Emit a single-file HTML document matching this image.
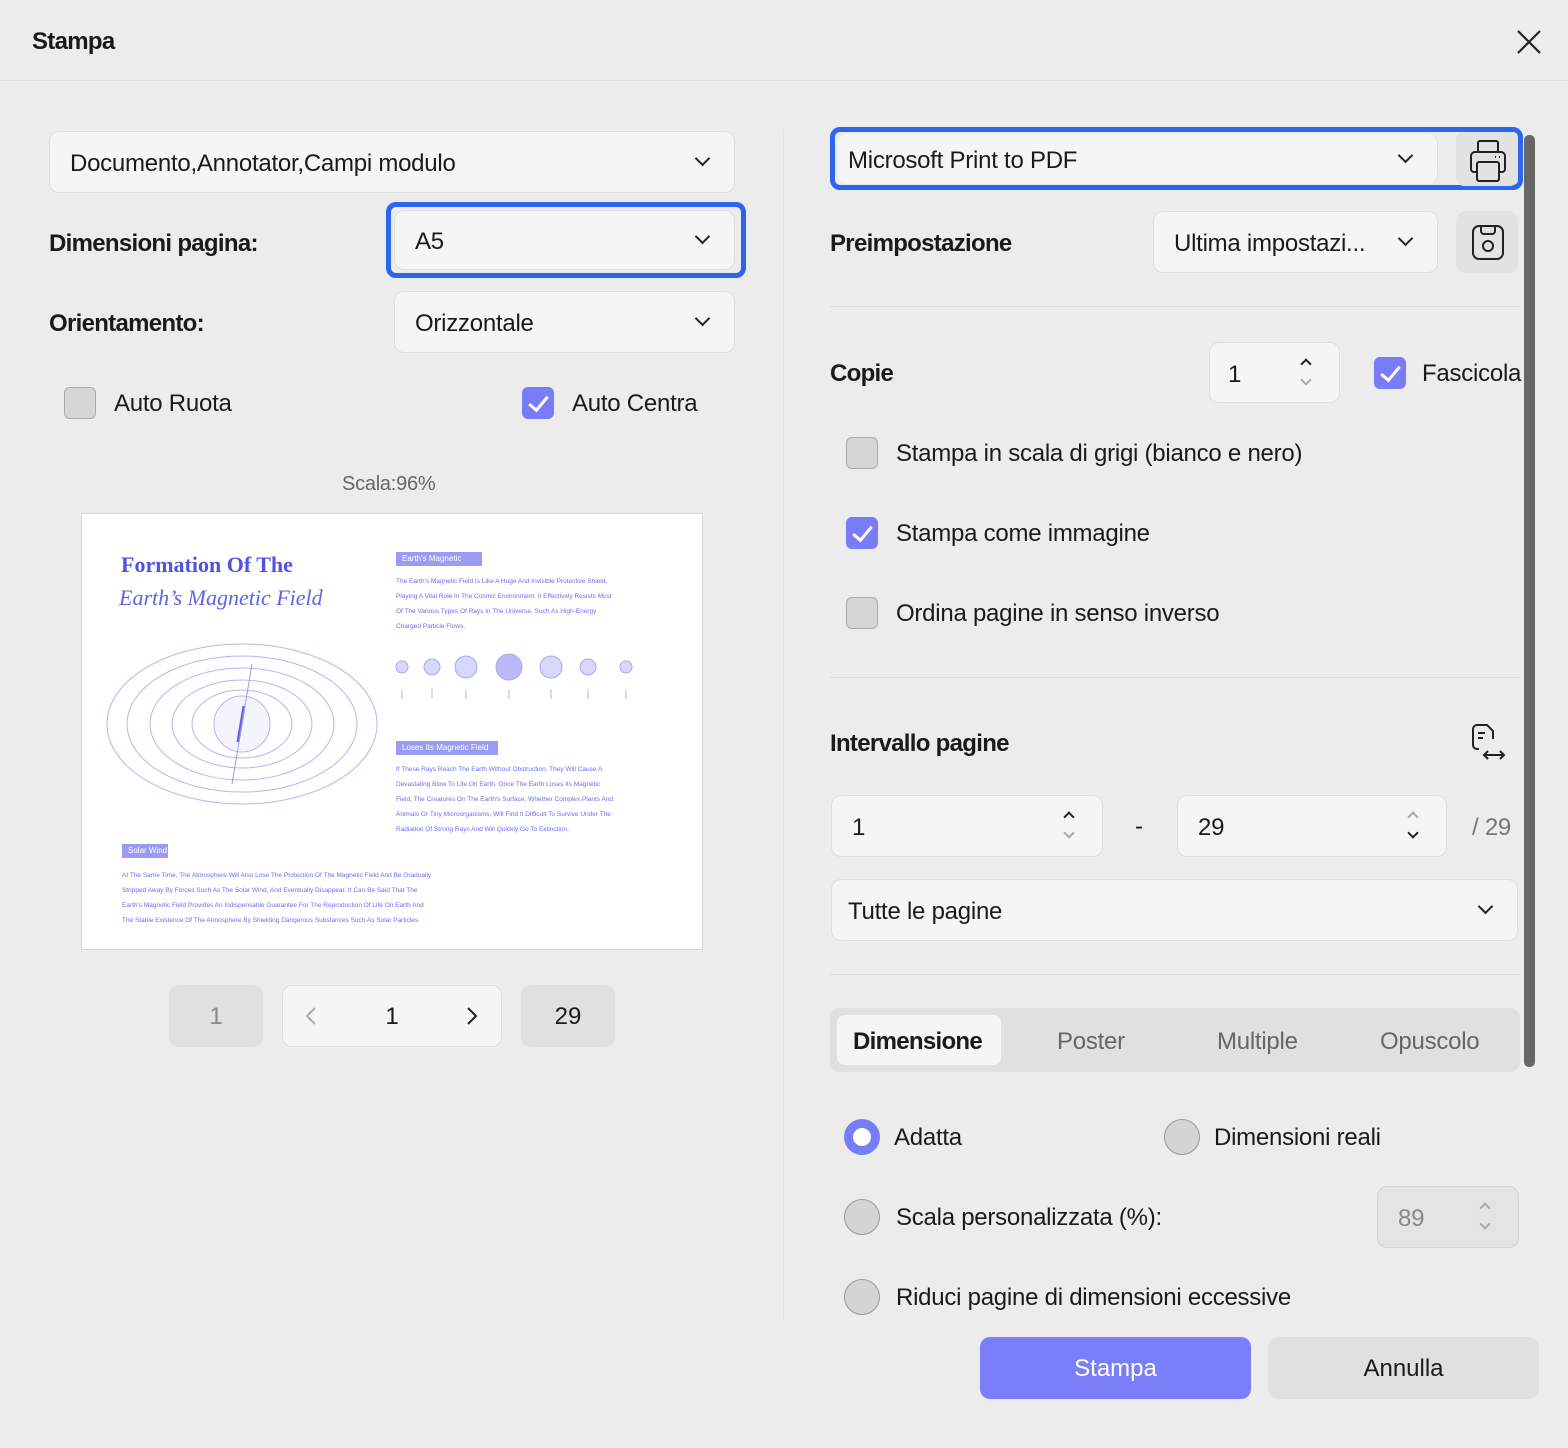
<!DOCTYPE html>
<html><head><meta charset="utf-8"><style>
*{box-sizing:border-box;margin:0;padding:0}
body{width:1568px;height:1448px;background:#ececec;font-family:"Liberation Sans",sans-serif;color:#1a1a1a;position:relative;overflow:hidden}
.a{position:absolute}
.t{position:absolute;font-size:24px;line-height:30px;white-space:nowrap;letter-spacing:-0.25px}
.b{font-weight:bold;letter-spacing:-0.7px}
.dd{position:absolute;background:#f5f5f5;border:1.5px solid #dedede;border-radius:10px}
.dd .t{left:20px;top:50%;margin-top:-13px}
.chev{position:absolute;right:26px;top:50%;width:11px;height:11px;border-right:2px solid #222;border-bottom:2px solid #222;transform:rotate(45deg);margin-top:-9px}
.cb{position:absolute;width:32px;height:32px;border-radius:6px;background:#d6d6d6;border:1.5px solid #aaa}
.cb.on{background:#7a7cf7;border-color:#7a7cf7}
.cb.on:after{content:"";position:absolute;left:10px;top:4px;width:8px;height:16px;border-right:3px solid #fff;border-bottom:3px solid #fff;transform:rotate(40deg)}
.rd{position:absolute;width:36px;height:36px;border-radius:50%;background:#d4d4d4;border:1.5px solid #999}
.rd.on{background:#fff;border:9px solid #7a7cf7}
.sep{position:absolute;height:1px;background:#dcdcdc}
.spin{position:absolute;right:26px;top:50%;width:14px;height:30px;margin-top:-17px}
.spin i{position:absolute;left:3px;width:8px;height:8px;border-left:2px solid #222;border-top:2px solid #222;transform:rotate(45deg)}
.spin i.d{top:20px;transform:rotate(225deg);border-color:#aaa}
.btn{position:absolute;border-radius:10px;text-align:center;font-size:24px}
.pv{font-family:"Liberation Sans",sans-serif;color:#6b6ef0;position:absolute;white-space:nowrap}
</style></head><body>
<div class="t b" style="left:32px;top:27px">Stampa</div>
<svg class="a" style="left:1515px;top:28px" width="28" height="28"><path d="M3 3L25 25M25 3L3 25" stroke="#222" stroke-width="2.2"/></svg>
<div class="sep" style="left:0;top:80px;width:1568px"></div>
<div class="a" style="left:783px;top:130px;width:1px;height:1190px;background:#e2e2e2"></div>

<div class="dd" style="left:49px;top:131px;width:686px;height:62px"><div class="t">Documento,Annotator,Campi modulo</div><div class="chev"></div></div>
<div class="t b" style="left:49px;top:229px">Dimensioni pagina:</div>
<div class="a" style="left:386px;top:202px;width:360px;height:76px;border:5px solid #2c66ee;border-radius:10px"></div>
<div class="dd" style="left:394px;top:210px;width:341px;height:60px"><div class="t">A5</div><div class="chev"></div></div>
<div class="t b" style="left:49px;top:309px">Orientamento:</div>
<div class="dd" style="left:394px;top:291px;width:341px;height:62px"><div class="t">Orizzontale</div><div class="chev"></div></div>
<div class="cb" style="left:64px;top:387px"></div><div class="t" style="left:114px;top:389px">Auto Ruota</div>
<div class="cb on" style="left:522px;top:387px"></div><div class="t" style="left:572px;top:389px">Auto Centra</div>
<div class="t" style="left:342px;top:469px;font-size:20px;color:#666">Scala:96%</div>

<div class="a" style="left:81px;top:513px;width:622px;height:437px;background:#fff;border:1.5px solid #d8d8d8;overflow:hidden">
 <div class="pv" style="left:39px;top:38px;font-family:'Liberation Serif',serif;font-weight:bold;font-size:22px;color:#5052e0">Formation Of The</div>
 <div class="pv" style="left:37px;top:71px;font-family:'Liberation Serif',serif;font-style:italic;font-size:22px;color:#6063e6">Earth’s Magnetic Field</div>
 <svg class="a" style="left:20px;top:120px" width="280" height="180" fill="none" stroke="#b4b5f2" stroke-width="1">
  <ellipse cx="140" cy="90" rx="135" ry="80"/><ellipse cx="140" cy="90" rx="115" ry="68"/><ellipse cx="140" cy="90" rx="92" ry="56"/><ellipse cx="140" cy="90" rx="70" ry="44"/><ellipse cx="140" cy="90" rx="50" ry="34"/>
  <circle cx="140" cy="90" r="28" fill="#f4f4ff"/><path d="M142 72L136 108" stroke="#6063e6" stroke-width="3"/><path d="M150 30L130 150" stroke="#9a9bee"/>
 </svg>
 <div class="a" style="left:314px;top:38px;width:86px;height:14px;background:#9a9cf4"></div>
 <div class="pv" style="left:320px;top:40px;font-size:8px;color:#fff">Earth's Magnetic</div>
 <div class="pv" style="left:314px;top:60px;font-size:6.5px;line-height:15px">The Earth's Magnetic Field Is Like A Huge And Invisible Protective Shield,<br>Playing A Vital Role In The Cosmic Environment. It Effectively Resists Most<br>Of The Various Types Of Rays In The Universe, Such As High-Energy<br>Charged Particle Flows.</div>
 <svg class="a" style="left:310px;top:135px" width="250" height="65"><g fill="#d6d7fb" stroke="#a8a9f2"><circle cx="10" cy="18" r="6"/><circle cx="40" cy="18" r="8"/><circle cx="74" cy="18" r="11"/><circle cx="117" cy="18" r="13" fill="#b8b9f6"/><circle cx="159" cy="18" r="11"/><circle cx="196" cy="18" r="8"/><circle cx="234" cy="18" r="6"/></g><g stroke="#bbb"><path d="M10 40v10M40 40v10M74 40v10M117 40v10M159 40v10M196 40v10M234 40v10"/></g></svg>
 <div class="a" style="left:314px;top:227px;width:102px;height:14px;background:#9a9cf4"></div>
 <div class="pv" style="left:320px;top:229px;font-size:8px;color:#fff">Loses Its Magnetic Field</div>
 <div class="pv" style="left:314px;top:248px;font-size:6.5px;line-height:15px">If These Rays Reach The Earth Without Obstruction, They Will Cause A<br>Devastating Blow To Life On Earth. Once The Earth Loses Its Magnetic<br>Field, The Creatures On The Earth's Surface, Whether Complex Plants And<br>Animals Or Tiny Microorganisms, Will Find It Difficult To Survive Under The<br>Radiation Of Strong Rays And Will Quickly Go To Extinction.</div>
 <div class="a" style="left:40px;top:330px;width:46px;height:14px;background:#9a9cf4"></div>
 <div class="pv" style="left:46px;top:332px;font-size:8px;color:#fff">Solar Wind</div>
 <div class="pv" style="left:40px;top:354px;font-size:6.5px;line-height:15px">At The Same Time, The Atmosphere Will Also Lose The Protection Of The Magnetic Field And Be Gradually<br>Stripped Away By Forces Such As The Solar Wind, And Eventually Disappear. It Can Be Said That The<br>Earth's Magnetic Field Provides An Indispensable Guarantee For The Reproduction Of Life On Earth And<br>The Stable Existence Of The Atmosphere By Shielding Dangerous Substances Such As Solar Particles.</div>
</div>

<div class="btn" style="left:169px;top:985px;width:94px;height:62px;background:#e0e0e0;color:#888;line-height:64px">1</div>
<div class="btn" style="left:282px;top:985px;width:220px;height:62px;background:#f5f5f5;border:1.5px solid #dedede;line-height:62px">1</div>
<svg class="a" style="left:303px;top:1006px" width="16" height="20"><path d="M12 2L4 10L12 18" stroke="#aaa" stroke-width="2" fill="none"/></svg>
<svg class="a" style="left:464px;top:1006px" width="16" height="20"><path d="M4 2L12 10L4 18" stroke="#222" stroke-width="2" fill="none"/></svg>
<div class="btn" style="left:521px;top:985px;width:94px;height:62px;background:#e0e0e0;line-height:64px">29</div>

<div class="a" style="left:830px;top:127px;width:693px;height:63px;border:5px solid #2c66ee;border-radius:10px"></div>
<div class="dd" style="left:838px;top:134px;width:600px;height:50px;border:none;border-right:1.5px solid #dedede"><div class="t" style="left:10px">Microsoft Print to PDF</div><div class="chev"></div></div>
<div class="a" style="left:1456px;top:132px;width:62px;height:54px;background:#e2e2e2;border-radius:8px"></div>
<svg class="a" style="left:1468px;top:139px" width="40" height="44" fill="none" stroke="#222" stroke-width="2"><rect x="10" y="2" width="20" height="11" rx="2"/><path d="M9 33H6a3 3 0 0 1-3-3V17a4 4 0 0 1 4-4h26a4 4 0 0 1 4 4v13a3 3 0 0 1-3 3h-3"/><rect x="9" y="23" width="22" height="19" rx="2"/><path d="M27 18h1M31 18h1"/></svg>

<div class="t b" style="left:830px;top:229px">Preimpostazione</div>
<div class="dd" style="left:1153px;top:211px;width:285px;height:62px"><div class="t">Ultima impostazi...</div><div class="chev"></div></div>
<div class="a" style="left:1456px;top:211px;width:62px;height:62px;background:#e2e2e2;border-radius:10px"></div>
<svg class="a" style="left:1470px;top:223px" width="36" height="40" fill="none" stroke="#222" stroke-width="2"><rect x="3" y="3" width="30" height="33" rx="6"/><path d="M11 3v5a3 3 0 0 0 3 3h8a3 3 0 0 0 3-3V3"/><circle cx="18" cy="23" r="5"/></svg>
<div class="sep" style="left:830px;top:306px;width:690px"></div>

<div class="t b" style="left:830px;top:359px">Copie</div>
<div class="dd" style="left:1209px;top:342px;width:131px;height:61px"><div class="t" style="left:18px">1</div><div class="spin"><i style="top:4px"></i><i class="d"></i></div></div>
<div class="cb on" style="left:1374px;top:357px"></div><div class="t" style="left:1422px;top:359px">Fascicola</div>
<div class="cb" style="left:846px;top:437px"></div><div class="t" style="left:896px;top:439px">Stampa in scala di grigi (bianco e nero)</div>
<div class="cb on" style="left:846px;top:517px"></div><div class="t" style="left:896px;top:519px">Stampa come immagine</div>
<div class="cb" style="left:846px;top:597px"></div><div class="t" style="left:896px;top:599px">Ordina pagine in senso inverso</div>
<div class="sep" style="left:830px;top:677px;width:690px"></div>

<div class="t b" style="left:830px;top:729px">Intervallo pagine</div>
<svg class="a" style="left:1470px;top:722px" width="40" height="40" fill="none" stroke="#222" stroke-width="2"><path d="M9 27H7a4 4 0 0 1-4-4V7a4 4 0 0 1 4-4h10l6 6v8"/><path d="M8 11h7M8 16h5"/><path d="M14 33h20M18 29l-4 4 4 4M30 29l4 4-4 4"/></svg>
<div class="dd" style="left:831px;top:795px;width:272px;height:62px"><div class="t">1</div><div class="spin"><i style="top:4px"></i><i class="d"></i></div></div>
<div class="t" style="left:1135px;top:812px">-</div>
<div class="dd" style="left:1177px;top:795px;width:270px;height:62px"><div class="t">29</div><div class="spin"><i style="top:4px;border-color:#aaa"></i><i class="d" style="border-color:#222"></i></div></div>
<div class="t" style="left:1472px;top:813px;color:#777">/ 29</div>
<div class="dd" style="left:831px;top:879px;width:687px;height:62px"><div class="t" style="left:16px">Tutte le pagine</div><div class="chev"></div></div>
<div class="sep" style="left:830px;top:974px;width:690px"></div>

<div class="a" style="left:830px;top:1008px;width:690px;height:64px;background:#e0e0e0;border-radius:10px"></div>
<div class="a" style="left:837px;top:1015px;width:164px;height:50px;background:#f5f5f5;border-radius:8px"></div>
<div class="t b" style="left:853px;top:1027px">Dimensione</div>
<div class="t" style="left:1057px;top:1027px;color:#666">Poster</div>
<div class="t" style="left:1217px;top:1027px;color:#666">Multiple</div>
<div class="t" style="left:1380px;top:1027px;color:#666">Opuscolo</div>

<div class="rd on" style="left:844px;top:1119px"></div><div class="t" style="left:894px;top:1123px">Adatta</div>
<div class="rd" style="left:1164px;top:1119px"></div><div class="t" style="left:1214px;top:1123px">Dimensioni reali</div>
<div class="rd" style="left:844px;top:1199px"></div><div class="t" style="left:896px;top:1203px">Scala personalizzata (%):</div>
<div class="dd" style="left:1377px;top:1186px;width:142px;height:62px;background:#e4e4e4;border-color:#d4d4d4"><div class="t" style="color:#888">89</div><div class="spin"><i style="top:4px;border-color:#aaa"></i><i class="d"></i></div></div>
<div class="rd" style="left:844px;top:1279px"></div><div class="t" style="left:896px;top:1283px">Riduci pagine di dimensioni eccessive</div>

<div class="btn" style="left:980px;top:1337px;width:271px;height:62px;background:#7a7ef8;color:#fff;line-height:64px">Stampa</div>
<div class="btn" style="left:1268px;top:1337px;width:271px;height:62px;background:#e0e0e0;line-height:64px">Annulla</div>

<div class="a" style="left:1524px;top:135px;width:11px;height:932px;background:#676767;border-radius:5px"></div>
</body></html>
